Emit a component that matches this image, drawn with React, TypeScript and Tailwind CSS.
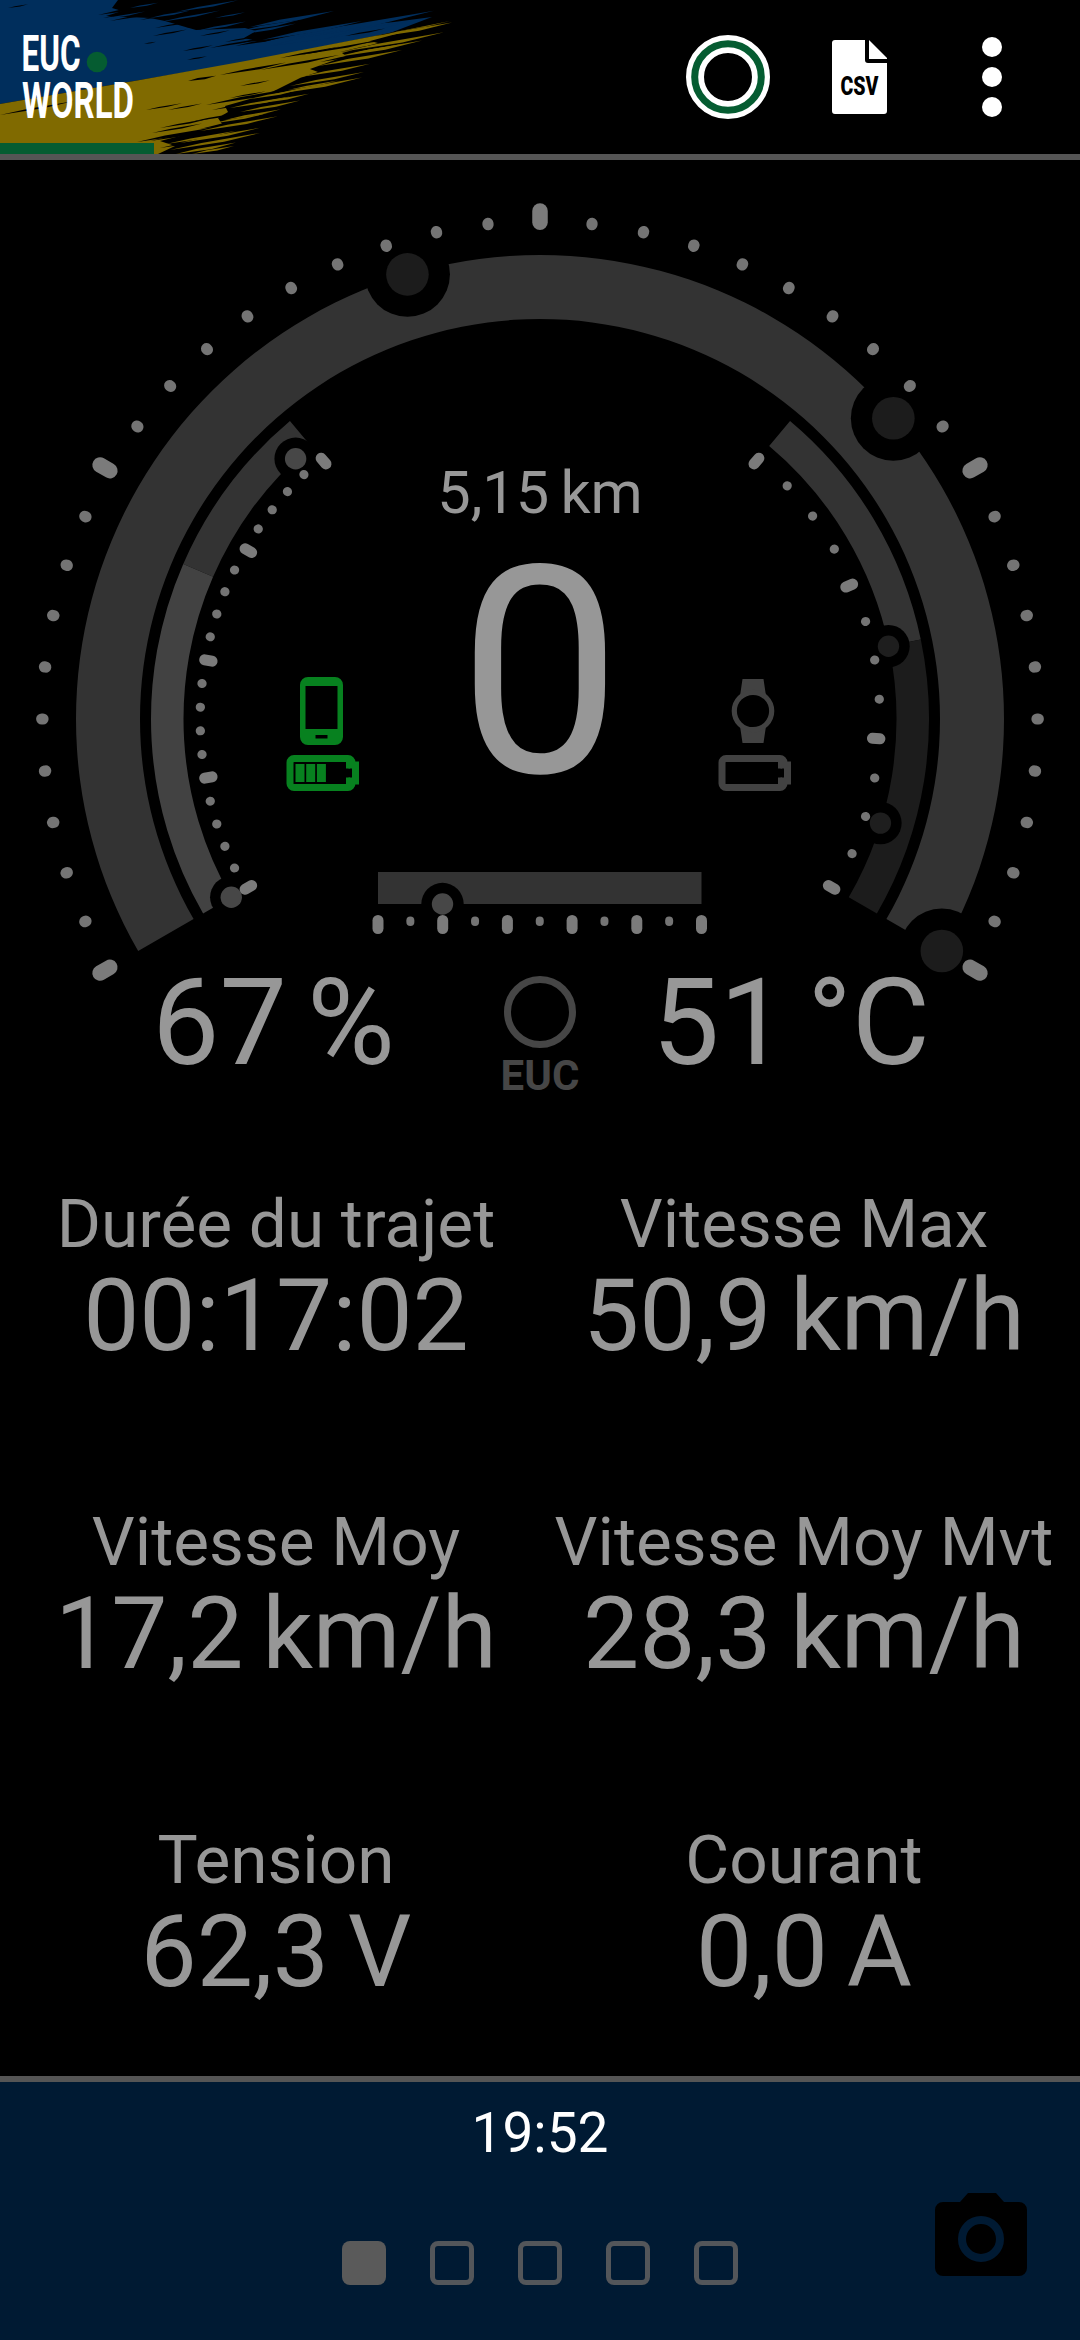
interface Stat {
  label: string;
  value: string;
}

interface Knob {
  angle: number;
  radius: number;
  size: number;
  halo: number;
  color: string;
}

const stats: Stat[] = [
  { label: 'Durée du trajet', value: '00:17:02' },
  { label: 'Vitesse Max', value: '50,9 km/h' },
  { label: 'Vitesse Moy', value: '17,2 km/h' },
  { label: 'Vitesse Moy Mvt', value: '28,3 km/h' },
  { label: 'Tension', value: '62,3 V' },
  { label: 'Courant', value: '0,0 A' },
];

// Gauge center inside the dial drawing
const CX = 540;
const CY = 559;

// Angles are in degrees, 0 is straight up, positive goes clockwise
const point = (angle: number, radius: number) => {
  const rad = (angle * Math.PI) / 180;
  return [CX + radius * Math.sin(rad), CY - radius * Math.cos(rad)];
};

const band = (from: number, to: number, outer: number, inner: number) => {
  const large = to - from > 180 ? 1 : 0;
  const [x1, y1] = point(from, outer);
  const [x2, y2] = point(to, outer);
  const [x3, y3] = point(to, inner);
  const [x4, y4] = point(from, inner);
  return `M${x1} ${y1}A${outer} ${outer} 0 ${large} 1 ${x2} ${y2}L${x3} ${y3}A${inner} ${inner} 0 ${large} 0 ${x4} ${y4}Z`;
};

const knobs: Knob[] = [
  { angle: -16.6, radius: 464, size: 21.3, halo: 42.5, color: '#1c1c1c' },
  { angle: 49.6, radius: 464, size: 21.3, halo: 42.5, color: '#1c1c1c' },
  { angle: 120, radius: 464, size: 21.3, halo: 42.5, color: '#1c1c1c' },
  { angle: -43.2, radius: 357, size: 10.7, halo: 21.2, color: '#474747' },
  { angle: -120, radius: 356.5, size: 10.7, halo: 21.2, color: '#474747' },
  { angle: 78.2, radius: 356, size: 10.7, halo: 21.2, color: '#1e1e1e' },
  { angle: 107, radius: 356, size: 10.7, halo: 21.2, color: '#1e1e1e' },
];

interface TicksProps {
  from: number;
  to: number;
  count: number;
  every: number;
  major: [number, number, number]; // start radius, end radius, width
  minor: [number, number, number];
}

const Ticks = ({ from, to, count, every, major, minor }: TicksProps) => (
  <g strokeLinecap="round">
    {Array.from({ length: count + 1 }, (_, i) => {
      const angle = from + ((to - from) * i) / count;
      const isMajor = i % every === 0;
      const [r1, r2, width] = isMajor ? major : minor;
      const [x1, y1] = point(angle, r1);
      const [x2, y2] = point(angle, r2);
      return (
        <line key={i} x1={x1} y1={y1} x2={x2} y2={y2} stroke={isMajor ? '#7b7b7b' : '#747474'} strokeWidth={width} />
      );
    })}
  </g>
);

// x, y, length, thickness of each brush hair
const darkHairs = [
  [98, 15, 60, 1.8], [103, 18, 50, 1.5], [110, 21, 50, 1.2], [120, 9, 60, 5], [128, 13, 60, 3], [150, 16, 60, 3],
  [140, 20, 40, 1.2], [182, 24, 60, 4], [186, 28, 60, 3], [153, 36, 34, 1], [205, 22, 60, 4], [144, 44, 12, 0.8],
  [183, 51, 30, 1.2], [187, 60, 20, 1], [210, 48, 50, 1.2], [235, 46, 50, 1.5], [240, 43, 60, 3], [246, 39, 46, 3],
  [225, 42, 30, 0.8], [8, 8, 20, 0.8], [155, 28, 36, 0.8], [200, 36, 30, 0.8], [260, 33, 50, 1.5], [280, 30, 50, 1.5],
  [300, 26, 40, 1.5],
];
const blueHairs = [
  [250, 27, 84, 2.5], [240, 31, 60, 2], [262, 40, 100, 2.5], [290, 38, 144, 3], [300, 42, 110, 4], [150, 18, 40, 1.5],
  [176, 12, 62, 1.2], [160, 22, 60, 1.2], [215, 18, 30, 0.8], [130, 8, 28, 1], [236, 35, 60, 1.5], [270, 46, 90, 4],
  [105, 19, 40, 0.8], [196, 31, 50, 1.5],
];
const darkYellowHairs = [
  [188, 81, 28, 2], [220, 75, 66, 1.5], [260, 70, 80, 1.2], [206, 105, 100, 2], [212, 110, 80, 2], [222, 115, 70, 2.5],
  [250, 98, 60, 1.5], [270, 92, 60, 2], [290, 85, 60, 2], [300, 78, 60, 2], [310, 70, 60, 2], [320, 62, 60, 1.5],
  [340, 52, 60, 1.8], [360, 44, 60, 1.8], [137, 142, 80, 1.8], [150, 141, 80, 2], [160, 148, 80, 2], [172, 152, 70, 2],
  [146, 110, 36, 0.8], [168, 110, 34, 0.8], [152, 133, 50, 1], [160, 128, 50, 1], [190, 122, 50, 1.2],
  [0, 115, 74, 1], [180, 137, 60, 1.8], [200, 129, 60, 2], [280, 58, 60, 1], [300, 55, 80, 1],
  [240, 86, 30, 0.8], [230, 98, 36, 0.8], [345, 36, 40, 0.8], [376, 36, 50, 1.2],
];
const yellowHairs = [
  [370, 38, 82, 2], [340, 52, 104, 1.6], [330, 58, 92, 1.8], [318, 66, 84, 2], [290, 86, 74, 1.4], [270, 95, 92, 1.8],
  [255, 104, 54, 1.6], [240, 112, 60, 1.6], [225, 120, 56, 1.6], [200, 131, 78, 1.4], [180, 143, 80, 1.6],
  [170, 150, 90, 1.6], [176, 154, 60, 2], [192, 154, 42, 1.6], [210, 124, 58, 1.2], [288, 90, 50, 1.2],
  [350, 54, 54, 1.4], [300, 77, 70, 1.6], [230, 108, 60, 1.4], [166, 144, 70, 1.4], [250, 99, 50, 1.4],
];

const hair = ([x, y, len, t]: number[]) =>
  `M${x} ${y}L${x + len * 0.35} ${y - len * 0.07 - t / 2}L${x + len} ${y - len * 0.19}L${x + len * 0.6} ${y - len * 0.1 + t / 2}Z`;

const Brush = () => (
  <>
    <path
      d="M0 0H118L112 8L122 11L106 16L150 18L165 21L182 26L196 30L245 28L256 31L244 38L262 42L300 34L345 27L394 22L432 17L390 33L240 63L140 80L0 104Z"
      fill="#002e5c"
    />
    <path
      d="M0 104L140 80L240 62L390 33L450 21L400 33L370 41L378 43L342 53L346 56L310 69L318 72L300 78L268 94L225 106L228 112L218 118L222 124L180 136L160 141L175 146L158 154H0Z"
      fill="#806a00"
    />
    <g fill="#000">{darkHairs.map((h, i) => <path key={i} d={hair(h)} />)}</g>
    <g fill="#002e5c">{blueHairs.map((h, i) => <path key={i} d={hair(h)} />)}</g>
    <g fill="#000">{darkYellowHairs.map((h, i) => <path key={i} d={hair(h)} />)}</g>
    <g fill="#806a00">{yellowHairs.map((h, i) => <path key={i} d={hair(h)} />)}</g>
  </>
);

const Header = () => (
  <header className="flex h-40 shrink-0 items-center justify-between border-b-[6px] border-[#555555]">
    <svg className="h-[154px] w-[480px]" viewBox="0 0 480 154">
      <Brush />
      <rect y="143" width="154" height="11" fill="#055c31" />
      <circle cx="97" cy="62" r="10.3" fill="#055c31" />
      <g fill="#fff" fontFamily="Roboto, sans-serif" fontWeight="700" fontSize="50">
        <text x="21.5" y="71" textLength="59" lengthAdjust="spacingAndGlyphs">EUC</text>
        <text x="22" y="117.5" textLength="112" lengthAdjust="spacingAndGlyphs">WORLD</text>
      </g>
    </svg>
    <div className="flex items-center pr-[78px]">
      <svg className="h-[84px] w-[84px]" viewBox="0 0 84 84">
        <circle cx="42" cy="42" r="33" fill="none" stroke="#fff" strokeWidth="18" />
        <circle cx="42" cy="42" r="33.3" fill="none" stroke="#055c31" strokeWidth="7" />
      </svg>
      <svg className="ml-[62px] h-[74px] w-[56px] overflow-visible" viewBox="0 0 56 74">
        <path d="M3 0H33V20a3 3 0 0 0 3 3H55V71a3 3 0 0 1-3 3H3a3 3 0 0 1-3-3V3a3 3 0 0 1 3-3Z" fill="#fff" />
        <path d="M37 0L55 18V19H37Z" fill="#fff" />
        <text x="8.500" y="55" fontFamily="Roboto, sans-serif" fontWeight="900" fontSize="26" textLength="38" lengthAdjust="spacingAndGlyphs">
          CSV
        </text>
      </svg>
      <div className="ml-[94px] flex flex-col gap-[9.5px]">
        <span className="size-[20.5px] rounded-full bg-white" />
        <span className="size-[20.5px] rounded-full bg-white" />
        <span className="size-[20.5px] rounded-full bg-white" />
      </div>
    </div>
  </header>
);

const Battery = ({ level }: { level: number }) => (
  <>
    <path d="M7 3.5H61a4 4 0 0 1 4 4V10h3.5V26H65v2.500a4 4 0 0 1-4 4H7a4 4 0 0 1-4-4V7.500a4 4 0 0 1 4-4Z" fill="none" stroke="currentColor" strokeWidth="7" />
    <path d="M61 3V13.500M61 22.500V33" stroke="currentColor" strokeWidth="4" />
    {Array.from({ length: level }, (_, i) => (
      <rect key={i} x={8.5 + i * 10.7} y="9" width="9" height="18" fill="currentColor" />
    ))}
  </>
);

const Dial = () => (
  <svg className="h-[803px] w-full shrink-0 overflow-visible" viewBox="0 0 1080 803">
    <path d={band(-120, 120, 464, 400)} fill="#333333" />
    <path d={band(-66.5, -40, 389, 356.5)} fill="#333333" />
    <path d={band(-120, -66.5, 389, 356.5)} fill="#424242" />
    <path d={band(40, 78.2, 389, 356.5)} fill="#333333" />
    <path d={band(78.2, 120, 389, 356.5)} fill="#1c1c1c" />
    <rect x="378" y="712" width="323.500" height="32" fill="#333333" />

    {knobs.map((k) => {
      const [x, y] = point(k.angle, k.radius);
      return (
        <g key={k.angle}>
          <circle cx={x} cy={y} r={k.halo} fill="#000" />
          <circle cx={x} cy={y} r={k.size} fill={k.color} />
        </g>
      );
    })}
    <circle cx="442.500" cy="744" r="21.200" />
    <circle cx="442.500" cy="744" r="10.700" fill="#474747" />

    <Ticks from={-120} to={120} count={40} every={10} major={[496.7, 508, 15.5]} minor={[497, 498.3, 11.2]} />
    <Ticks from={-120} to={-40} count={20} every={5} major={[333, 340.5, 11]} minor={[339.7, 340, 9]} />
    <Ticks from={40} to={120} count={12} every={4} major={[333, 340.5, 11]} minor={[339.7, 340, 9]} />
    <g strokeLinecap="round">
      {Array.from({ length: 11 }, (_, i) => {
        const x = 378 + i * 32.35;
        return i % 2 === 0 ? (
          <line key={i} x1={x} x2={x} y1="760.500" y2="768.500" stroke="#7b7b7b" strokeWidth="11" />
        ) : (
          <line key={i} x1={x} x2={x} y1="760.500" y2="762" stroke="#747474" strokeWidth="8" />
        );
      })}
    </g>

    {/* phone */}
    <g className="text-[#07811f]">
      <g transform="translate(300 517)">
        <path fillRule="evenodd" d="M8 0H35a8 8 0 0 1 8 8V60a8 8 0 0 1-8 8H8a8 8 0 0 1-8-8V8a8 8 0 0 1 8-8ZM5.500 9V52H37.500V9ZM15.500 58V61.500H27.500V58Z" fill="currentColor" />
      </g>
      <g transform="translate(287 595)">
        <Battery level={3} />
      </g>
    </g>

    {/* watch */}
    <g className="text-[#424242]">
      <g transform="translate(731.500 519)">
        <path d="M11 0H32L34.500 17H8.500ZM8.500 47H34.500L32 64H11Z" fill="currentColor" />
        <circle cx="21.500" cy="32" r="18.700" fill="#000" stroke="currentColor" strokeWidth="5.200" />
      </g>
      <g transform="translate(719 595)">
        <Battery level={0} />
      </g>
    </g>

    <g fill="#979797" textAnchor="middle">
      <text x="540" y="352.500" fontSize="59.500" className="[word-spacing:-0.06em]">5,15 km</text>
      <text x="540" y="612" fontSize="290">0</text>
    </g>
  </svg>
);

const Footer = () => (
  <footer className="flex h-[264px] shrink-0 flex-col border-t-[6px] border-[#555555] bg-[#001a33]">
    <p className="mt-[19px] text-center text-[55px] leading-[64px] text-white">19:52</p>
    <div className="grid grid-cols-[1fr_auto_1fr] items-end pt-7">
      <span />
      <div className="-mb-[9px] flex gap-11">
        <span className="size-11 rounded-lg bg-[#5a5a5a]" />
        {[1, 2, 3, 4].map((page) => (
          <span key={page} className="size-11 rounded-lg border-[5px] border-[#53565a]" />
        ))}
      </div>
      <svg className="mr-[53px] h-[83px] w-[92px] justify-self-end" viewBox="0 0 92 83">
        <path d="M8 9H25L33 0H61L69 9H84a8 8 0 0 1 8 8V75a8 8 0 0 1-8 8H8a8 8 0 0 1-8-8V17a8 8 0 0 1 8-8Z" />
        <circle cx="46" cy="46" r="19" fill="none" stroke="#001a33" strokeWidth="8" />
      </svg>
    </div>
  </footer>
);

const App = () => {
  return (
    <main className="flex h-[2340px] w-[1080px] flex-col overflow-hidden bg-black font-['Roboto',sans-serif] text-[#979797]">
      <Header />
      <Dial />

      <section className="grid shrink-0 grid-cols-[470px_140px_1fr] items-start">
        <p className="pl-[77px] text-center text-[120px] leading-[121px] whitespace-nowrap [word-spacing:-0.08em]">67 %</p>
        <div className="flex flex-col items-center pt-[13px] text-[#464646]">
          <span className="size-[72px] rounded-full border-[7px] border-[#464646]" />
          <span className="mt-[3px] text-[42px] leading-[50px] font-bold">EUC</span>
        </div>
        <p className="pr-[108px] text-center text-[120px] leading-[121px] whitespace-nowrap [word-spacing:-0.08em]">51 °C</p>
      </section>

      <section className="grid flex-1 grid-cols-2 content-start gap-y-[134px] px-3 pt-[83px]">
        {stats.map((stat) => (
          <div key={stat.label} className="text-center whitespace-nowrap">
            <p className="text-[67.5px] leading-[80px]">{stat.label}</p>
            <p className="text-[100px] leading-[104px] [word-spacing:-0.06em]">{stat.value}</p>
          </div>
        ))}
      </section>

      <Footer />
    </main>
  );
};

export default App;
